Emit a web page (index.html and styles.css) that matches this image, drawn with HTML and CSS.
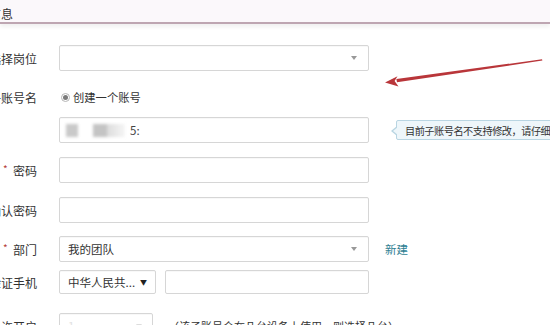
FILE: index.html
```html
<!DOCTYPE html>
<html lang="zh-CN">
<head>
<meta charset="utf-8">
<link rel="stylesheet" href="styles.css">
</head>
<body>
<div class="header"><span class="title">基本信息</span></div>
<div class="form">
  <div class="row r1">
    <span class="lbl">选择岗位</span>
    <div class="box wide select"><span class="val"></span><i class="caret"></i></div>
  </div>
  <div class="row r2">
    <span class="lbl">子账号名</span>
    <span class="radio"><i class="dot"></i></span><span class="radio-text">创建一个账号</span>
  </div>
  <div class="row r3">
    <span class="lbl"></span>
    <div class="box wide input">
      <span class="blur"><i class="b1"></i><i class="b2"></i><i class="b3"></i></span><span class="tail">5:</span>
    </div>
    <div class="tip">目前子账号名不支持修改，请仔细检查</div>
  </div>
  <div class="row r4">
    <span class="lbl"><em class="req">*</em>&nbsp; 密码</span>
    <div class="box wide input"></div>
  </div>
  <div class="row r5">
    <span class="lbl">确认密码</span>
    <div class="box wide input"></div>
  </div>
  <div class="row r6">
    <span class="lbl"><em class="req">*</em>&nbsp; 部门</span>
    <div class="box wide select"><span class="val">我的团队</span><i class="caret"></i></div>
    <a class="link">新建</a>
  </div>
  <div class="row r7">
    <span class="lbl">验证手机</span>
    <div class="box country"><span class="val">中华人民共...</span><span class="tri">▼</span></div>
    <div class="box phone"></div>
  </div>
  <div class="row r8">
    <span class="lbl">允许开启</span>
    <div class="box small"><span class="val faint">1</span><i class="caret light"></i></div>
    <span class="hint">（该子账号会在几台设备上使用，则选择几台）</span>
  </div>
</div>
<svg class="arrow" width="550" height="325" viewBox="0 0 550 325">
  <polygon points="542,59.3 542.4,60.6 397,82.2 396.4,78.9" fill="#b9363a"/>
  <polygon points="385,82.6 397.5,76.2 394.6,80.9 398.5,86.4" fill="#b9363a"/>
</svg>
</body>
</html>
```
FILE: styles.css
```css
html, body {
  margin: 0;
  padding: 0;
  overflow: hidden;
  background: #ffffff;
}
body {
  width: 550px;
  height: 325px;
  position: relative;
  font-family: "Noto Sans CJK SC", "Noto Sans", sans-serif;
  color: #333333;
  font-size: 12px;
}
.header {
  height: 22px;
  background: #fbf8fb;
  border-bottom: 2px solid #bea6b2;
  box-shadow: 0 3px 4px rgba(0, 0, 0, 0.06);
  display: flex;
  align-items: center;
  white-space: nowrap;
}
.title {
  margin-left: -35px;
  margin-top: 5px;
  font-size: 12px;
  color: #333;
}
.form {
  padding-top: 21px;
  margin-left: -23px;
}
.row {
  display: flex;
  align-items: center;
  white-space: nowrap;
}
.r1 { height: 26px; }
.r2 { height: 20px; margin-top: 16px; }
.r3 { height: 26px; margin-top: 10px; }
.r4 { height: 26px; margin-top: 14px; }
.r5 { height: 26px; margin-top: 14px; }
.r6 { height: 26px; margin-top: 13px; }
.r7 { height: 24px; margin-top: 8px; }
.r8 { height: 26px; margin-top: 19px; }
.lbl {
  width: 60px;
  flex: none;
  text-align: right;
  font-size: 12px;
  color: #333;
  margin-right: 22px;
}
.req {
  font-style: normal;
  color: #b5403a;
  font-size: 10px;
  vertical-align: 3px;
}
.box {
  box-sizing: border-box;
  height: 100%;
  border: 1px solid #d6d6d6;
  border-radius: 2px;
  background: #fff;
  display: flex;
  align-items: center;
  flex: none;
  box-shadow: inset 0 1px 1px rgba(0,0,0,0.03);
}
.wide { width: 310px; }
.select { padding: 0 9px 0 8px; justify-content: space-between; }
.val { font-size: 11.5px; color: #333; }
.val.faint { color: #e2e2e2; }
.caret {
  width: 0;
  height: 0;
  border-left: 3.5px solid transparent;
  border-right: 3.5px solid transparent;
  border-top: 4px solid #999;
  margin-right: 2px;
}
.caret.light { border-top-color: #ddd; }
.radio {
  width: 9px;
  height: 9px;
  box-sizing: border-box;
  border: 1px solid #b5b5b5;
  border-radius: 50%;
  display: flex;
  align-items: center;
  justify-content: center;
  margin-left: 2px;
  margin-right: 3px;
}
.dot {
  width: 5px;
  height: 5px;
  border-radius: 50%;
  background: #7a7a7a;
}
.radio-text { font-size: 11.3px; color: #333; }
.input { padding-left: 6px; }
.blur {
  display: flex;
  align-items: center;
  filter: blur(1.5px);
  width: 62px;
}
.blur i { display: block; height: 13px; }
.b1 { width: 12px; background: #c9c9c9; }
.b2 { width: 14px; margin-left: 15px; background: #c4c4c4; }
.b3 { width: 18px; background: linear-gradient(90deg, #dcdcdc, #f6f6f6); }
.tail { font-size: 11.5px; color: #444; margin-left: 2px; }
.tip {
  position: relative;
  margin-left: 27px;
  height: 20px;
  box-sizing: border-box;
  border: 1px solid #b9d5e2;
  background: #eef6fa;
  padding: 0 8px;
  display: flex;
  align-items: center;
  font-size: 10.2px;
  letter-spacing: -0.5px;
  color: #333;
  border-radius: 2px;
}
.tip::before {
  content: "";
  position: absolute;
  left: -6px;
  top: 5px;
  width: 0;
  height: 0;
  border-top: 5px solid transparent;
  border-bottom: 5px solid transparent;
  border-right: 6px solid #b9d5e2;
}
.tip::after {
  content: "";
  position: absolute;
  left: -4px;
  top: 6px;
  width: 0;
  height: 0;
  border-top: 4px solid transparent;
  border-bottom: 4px solid transparent;
  border-right: 5px solid #eef6fa;
}
.link {
  margin-left: 16px;
  font-size: 11.5px;
  color: #2f7f93;
}
.country {
  width: 97px;
  padding: 0 8px 0 8px;
  justify-content: space-between;
}
.tri { font-size: 7px; color: #222; }
.phone { width: 204px; margin-left: 9px; }
.small { width: 94px; padding: 0 8px; justify-content: space-between; }
.hint { margin-left: 15px; font-size: 11px; color: #333; }
.arrow {
  position: absolute;
  left: 0;
  top: 0;
  pointer-events: none;
}
```
